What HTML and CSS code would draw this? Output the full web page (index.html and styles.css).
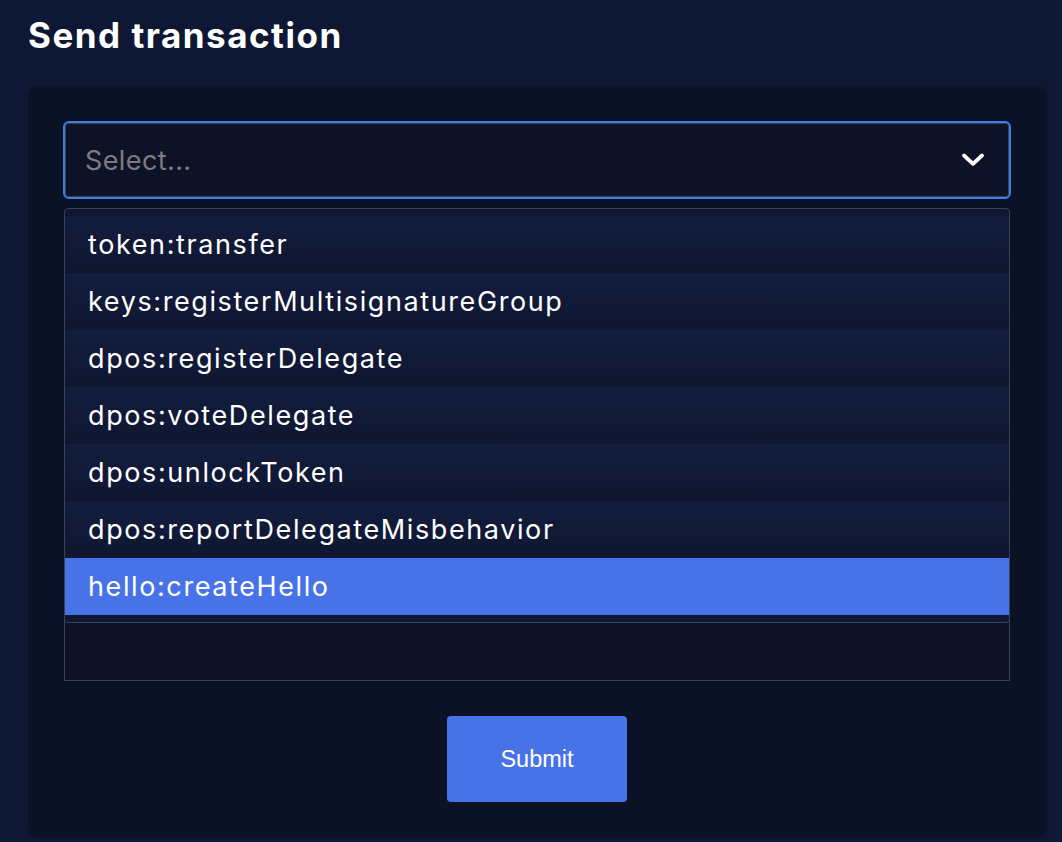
FILE: index.html
```html
<!DOCTYPE html>
<html lang="en">
<head>
<meta charset="utf-8">
<title>Send transaction</title>
<link rel="stylesheet" href="styles.css">
</head>
<body>
  <h1 class="page-title">Send transaction</h1>
  <section class="card">
    <div class="select-wrap">
      <div class="select-control">
        <span class="select-placeholder">Select...</span>
        <span class="select-indicator">
          <svg width="24" height="24" viewBox="0 0 24 24" aria-hidden="true">
            <path d="M3 7.5 L12 15.8 L21 7.5" fill="none" stroke="#ffffff" stroke-width="3.8" stroke-linecap="round" stroke-linejoin="round"/>
          </svg>
        </span>
      </div>
      <ul class="select-menu">
        <li class="option">token:transfer</li>
        <li class="option">keys:registerMultisignatureGroup</li>
        <li class="option">dpos:registerDelegate</li>
        <li class="option">dpos:voteDelegate</li>
        <li class="option">dpos:unlockToken</li>
        <li class="option">dpos:reportDelegateMisbehavior</li>
        <li class="option option-active">hello:createHello</li>
      </ul>
    </div>
    <div class="params-box"></div>
    <div class="actions">
      <button class="submit-btn" type="button">Submit</button>
    </div>
  </section>
</body>
</html>
```

FILE: styles.css
```css
html, body {
  margin: 0;
  padding: 0;
}

body {
  background: #0e1834;
  font-family: "Inter", "Open Sans", sans-serif;
  color: #ffffff;
  min-height: 842px;
  padding: 0 15px 0 28px;
  box-sizing: border-box;
}

.page-title {
  margin: 0;
  padding-top: 15px;
  height: 86px;
  box-sizing: border-box;
  font-size: 35px;
  font-weight: 700;
  letter-spacing: 1.5px;
  line-height: 40px;
  color: #ffffff;
}

.card {
  background: #0c1226;
  border-radius: 10px;
  padding: 35px 36px 36px 35px;
  width: 1019px;
  box-sizing: border-box;
}

.select-wrap {
  position: relative;
}

.select-control {
  height: 78px;
  box-sizing: border-box;
  border: 2px solid #3a7ee0;
  box-shadow: inset 0 0 0 1px #394057;
  border-radius: 6px;
  background: #0d1227;
  display: flex;
  align-items: center;
  padding: 0 24px 0 20px;
}

.select-placeholder {
  flex: 1;
  font-size: 27px;
  color: #7b7b80;
  letter-spacing: 0.4px;
}

.select-indicator {
  display: flex;
  width: 24px;
  height: 24px;
}

.select-menu {
  position: absolute;
  top: 87px;
  left: 1px;
  right: 1px;
  margin: 0;
  padding: 7px 0;
  list-style: none;
  border: 1px solid #3a4157;
  border-radius: 4px;
  background: #0f1730;
  z-index: 2;
}

.option {
  height: 57px;
  display: flex;
  align-items: center;
  padding: 0 23px;
  font-size: 27px;
  letter-spacing: 1.6px;
  color: #ffffff;
  background: linear-gradient(#131d3e, #0e1630);
}

.option-active {
  background: #4873e8;
}

.params-box {
  margin: 16px 1px 0;
  height: 464px;
  border: 1px solid #3a4157;
  background: #0d1227;
}

.actions {
  display: flex;
  justify-content: center;
  padding-top: 35px;
}

.submit-btn {
  width: 180px;
  height: 86px;
  border: none;
  border-radius: 4px;
  background: #4873e8;
  color: #ffffff;
  font-family: "Liberation Sans", Arial, sans-serif;
  font-size: 23.5px;
  cursor: pointer;
}
```
